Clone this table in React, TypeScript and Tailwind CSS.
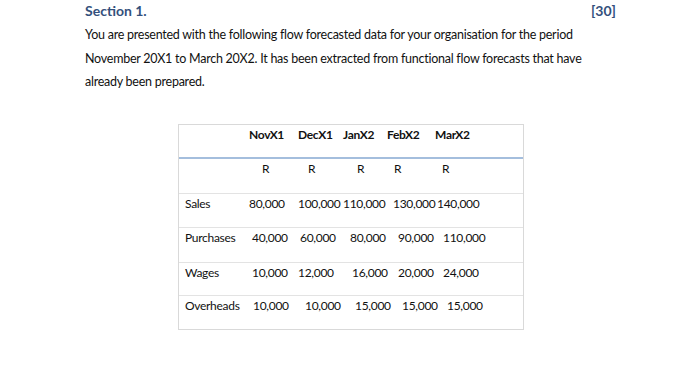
import React from 'react';

const font = { fontFamily: 'Lato, "Open Sans", sans-serif' };

const App: React.FC = () => {
  return (
    <div className="w-[700px] h-[377px] bg-white text-[#111] overflow-hidden" style={font}>
      <div className="pl-[85px] w-[616px]">
        {/* Titre */}
        <div className="flex justify-between pt-[2px] leading-[18px] text-[14px] font-bold text-[#33507c]">
          <span>Section 1.</span>
          <span>[30]</span>
        </div>

        <p className="mt-[3px] text-[12.5px] leading-[23.5px] tracking-[-0.25px]">
          You are presented with the following flow forecasted data for your organisation for the period
          <br />
          November 20X1 to March 20X2. It has been extracted from functional flow forecasts that have
          <br />
          already been prepared.
        </p>
      </div>

      {/* Tableau */}
      <div className="ml-[178px] mt-[30px] w-[346px] border border-[#d9d9d9] text-[12px] leading-[18px] tracking-[-0.3px]">
        <div className="flex h-[34px] pt-[1px] border-b-2 border-[#a4bedd] font-bold">
          <span className="w-[70px] shrink-0" />
          <span className="w-[49px] shrink-0">NovX1</span>
          <span className="w-[45px] shrink-0">DecX1</span>
          <span className="w-[44px] shrink-0">JanX2</span>
          <span className="w-[48px] shrink-0">FebX2</span>
          <span className="shrink-0">MarX2</span>
        </div>

        <div className="flex h-[35px] pt-[1px] border-b border-[#e3e3e3]">
          <span className="w-[83px] shrink-0" />
          <span className="w-[46px] shrink-0">R</span>
          <span className="w-[49px] shrink-0">R</span>
          <span className="w-[37px] shrink-0">R</span>
          <span className="w-[48px] shrink-0">R</span>
          <span className="shrink-0">R</span>
        </div>

        <div className="flex h-[34px] pt-[1px] border-b border-[#e3e3e3]">
          <span className="pl-[6px] w-[70px] shrink-0">Sales</span>
          <span className="w-[49px] shrink-0">80,000</span>
          <span className="w-[45px] shrink-0">100,000</span>
          <span className="w-[50px] shrink-0">110,000</span>
          <span className="w-[44px] shrink-0">130,000</span>
          <span className="shrink-0">140,000</span>
        </div>

        <div className="flex h-[35px] pt-[1px] border-b border-[#e3e3e3]">
          <span className="pl-[6px] w-[73px] shrink-0">Purchases</span>
          <span className="w-[48px] shrink-0">40,000</span>
          <span className="w-[50px] shrink-0">60,000</span>
          <span className="w-[48px] shrink-0">80,000</span>
          <span className="w-[45px] shrink-0">90,000</span>
          <span className="shrink-0">110,000</span>
        </div>

        <div className="flex h-[33px] pt-[1px] border-b border-[#e3e3e3]">
          <span className="pl-[6px] w-[73px] shrink-0">Wages</span>
          <span className="w-[46px] shrink-0">10,000</span>
          <span className="w-[54px] shrink-0">12,000</span>
          <span className="w-[46px] shrink-0">16,000</span>
          <span className="w-[45px] shrink-0">20,000</span>
          <span className="shrink-0">24,000</span>
        </div>

        <div className="flex h-[33px] pt-[1px]">
          <span className="pl-[6px] w-[74px] shrink-0">Overheads</span>
          <span className="w-[52px] shrink-0">10,000</span>
          <span className="w-[50px] shrink-0">10,000</span>
          <span className="w-[47px] shrink-0">15,000</span>
          <span className="w-[45px] shrink-0">15,000</span>
          <span className="shrink-0">15,000</span>
        </div>
      </div>
    </div>
  );
};

export default App;
